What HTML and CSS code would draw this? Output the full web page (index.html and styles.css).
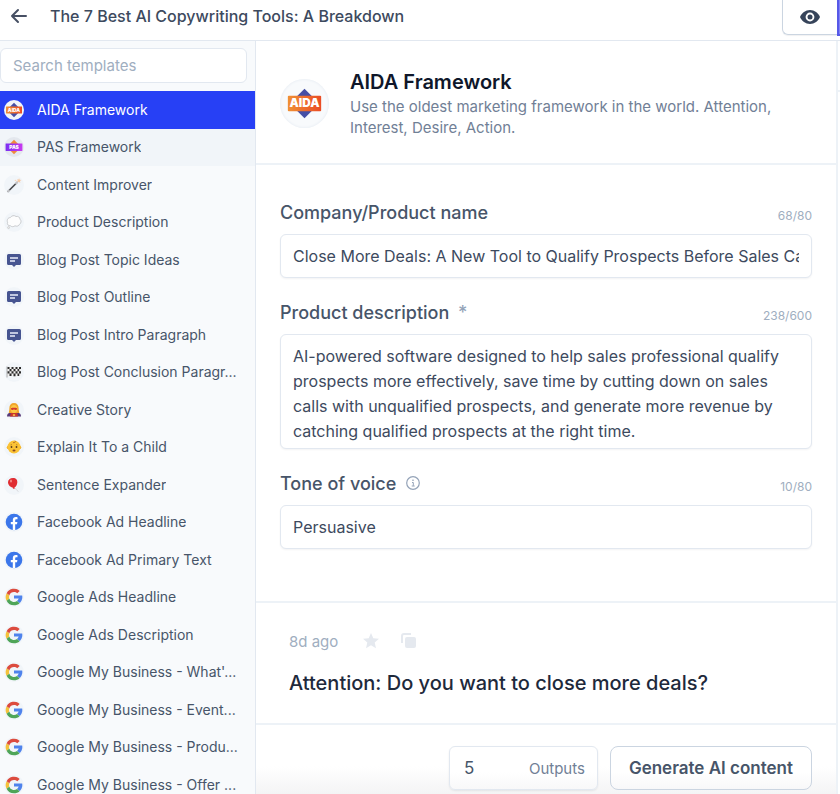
FILE: index.html
```html
<!DOCTYPE html>
<html lang="en">

<head>
    <meta charset="UTF-8">
    <meta name="viewport" content="width=device-width, initial-scale=1.0">
    <title>AIDA Framework</title>
    <link rel="stylesheet" href="styles.css">
</head>

<body>
    <!-- Shared icons -->
    <svg class="sprite" aria-hidden="true">
        <defs>
            <linearGradient id="orange" x1="0" x2="1">
                <stop offset="0" stop-color="#f09035" />
                <stop offset="1" stop-color="#ea4c25" />
            </linearGradient>
            <linearGradient id="purple" x1="0" x2="1">
                <stop offset="0" stop-color="#7b2ff2" />
                <stop offset="1" stop-color="#c93af0" />
            </linearGradient>
        </defs>
        <symbol id="icon-wand" viewBox="0 0 20 20">
            <path d="M4 16.5 13 7.5" stroke="#4a4a4e" stroke-width="1.7" stroke-linecap="round" />
            <path d="M12 8.5l2-2M4 16.5l1-1" stroke="#c9c9cc" stroke-width="1.7" stroke-linecap="round" />
            <path d="M15 3l.7 1.7 1.8.3-1.5 1 .3 2-1.5-1.2-1.7.5.8-1.7-.8-1.4 1.6.2z" fill="#f7c9a5" />
            <circle cx="11.5" cy="5.5" r=".8" fill="#f9d9bd" />
        </symbol>
        <symbol id="icon-thought" viewBox="0 0 20 20">
            <path d="M6.500 13.800C4 14 2.800 12 3.600 10.300 2.500 8 4 5.500 6.300 5.600 7.500 3.500 10.500 3 12 4.500c2-.6 4 .8 4 2.700 1.600 1.300 1.300 4-.4 5-.6 1.800-3 2.500-4.600 1.600-1.500 1.200-3.500 1.100-4.500 0z" fill="#fdfdfd" stroke="#c4c6c9" stroke-width=".9" />
            <circle cx="4.600" cy="15.600" r="1" fill="#eee" stroke="#bbb" stroke-width=".5" />
        </symbol>
        <symbol id="icon-blog" viewBox="0 0 20 20">
            <path d="M4.500 4h11A1.500 1.500 0 0 1 17 5.500v8a1.500 1.500 0 0 1-1.500 1.500H12l-2 2-2-2H4.500A1.500 1.500 0 0 1 3 13.500v-8A1.500 1.500 0 0 1 4.500 4z" fill="#465490" />
            <path d="M6 8h8M6 11h5" stroke="#e9edfa" stroke-width="1.4" />
        </symbol>
        <symbol id="icon-flag" viewBox="0 0 20 20">
            <path d="M3 5c3-1 4 1 7 .3S14 5 17 5v9c-3-1-4 .8-7 .5S6 13.500 3 15z" fill="#f0f0f0" />
            <path d="M3.500 5h2v2h-2zM7.500 5h2v2h-2zM11.500 5h2v2h-2zM15 5h2v2h-2zM5.500 7h2v2.300h-2zM9.500 7h2v2.300h-2zM13.500 7h1.700v2.300h-1.700zM3.500 9.300h2v2.300h-2zM7.500 9.300h2v2.300h-2zM11.500 9.300h2v2.300h-2zM15 9.300h2v2.300h-2zM5.500 11.600h2v2.400h-2zM9.500 11.600h2v2.600h-2zM13.500 11.600h1.700v2.400h-1.700z" fill="#2b2b2b" />
            <path d="M3 4.500v11" stroke="#777" stroke-width=".6" />
        </symbol>
        <symbol id="icon-hero" viewBox="0 0 20 20">
            <path d="M3 16.500c0-3 2-4.500 7-4.500s7 1.500 7 4.500z" fill="#5a3a78" />
            <path d="M6 16.500 7 12h6l1 4.500z" fill="#c8352b" />
            <path d="M10 3c-3 0-4.600 2-4.600 5S4.500 12.500 5 13h10c.5-.5-.4-2-.4-5S13 3 10 3z" fill="#f1a52b" />
            <ellipse cx="10" cy="9" rx="3.2" ry="4" fill="#fcc845" />
            <path d="M7 8.200c1.500-.6 4.500-.6 6 0v1.200c-1.200.7-2.200.6-3-.1-.8.700-1.800.8-3 .1z" fill="#d3392d" />
            <path d="M10 14l1.500 1-1.500 1.300L8.500 15z" fill="#fbd04f" />
        </symbol>
        <symbol id="icon-baby" viewBox="0 0 20 20">
            <circle cx="4.500" cy="10.500" r="1.800" fill="#f2b02d" />
            <circle cx="15.500" cy="10.500" r="1.800" fill="#f2b02d" />
            <circle cx="10" cy="10" r="6.500" fill="#fbc336" />
            <path d="M9 5.500c1.800.5 3-.6 2-1.700" stroke="#a8692a" stroke-width=".9" fill="none" />
            <circle cx="7.500" cy="10" r=".9" fill="#573a1e" />
            <circle cx="12.500" cy="10" r=".9" fill="#573a1e" />
            <path d="M6.500 8l1.500-.4M13.500 8l-1.500-.4" stroke="#9c6422" stroke-width=".6" />
            <ellipse cx="10" cy="13.500" rx="1.500" ry="1" fill="#8a4a22" />
        </symbol>
        <symbol id="icon-balloon" viewBox="0 0 20 20">
            <path d="M10.500 13c2 .3 1.500 2.500 4 3.500" stroke="#c9c9cd" stroke-width=".6" fill="none" />
            <path d="M9 3c3 0 4.700 2 4.300 4.800-.3 2.400-1.700 4.300-3 5l.4 1.200-1.900-.4.300-.9C6.500 12.300 4 10 4 7.200 4 4.700 6 3 9 3z" fill="#e02d32" />
            <ellipse cx="7" cy="6" rx="1" ry="1.500" fill="#f58a86" />
        </symbol>
        <symbol id="icon-facebook" viewBox="0 0 20 20">
            <circle cx="10" cy="10" r="8.3" fill="#3b76ea" />
            <path d="M8.800 18.200v-5.900h-2V10h2V8.200c0-2 1.200-3.200 3-3.200.9 0 1.700.2 1.700.2v2h-1c-1 0-1.300.6-1.300 1.200V10h2.200l-.4 2.300h-1.800v5.900z" fill="#fff" />
        </symbol>
        <symbol id="icon-google" viewBox="0 0 48 48">
            <path fill="#4f83ec" d="M43.600 20.500H24v7.300h11.300c-.8 2.200-2.200 4.200-4.100 5.600l6.200 5.200C37 39.200 44 34 44 24c0-1.300-.1-2.400-.4-3.500z" />
            <path fill="#f4c23c" d="m6.300 14.700 6.600 4.800a12 12 0 0 0-.2 8.500l-6.500 5a20 20 0 0 1 .1-18.300z" />
            <path fill="#4fa558" d="M24 44c5.200 0 9.900-2 13.400-5.200l-6.200-5.200A12 12 0 0 1 12.700 28l-6.500 5A20 20 0 0 0 24 44z" />
            <path fill="#dc4b3e" d="m6.300 14.700 6.600 4.800A12 12 0 0 1 24 12c3.100 0 5.800 1.200 7.900 3l5.700-5.600A20 20 0 0 0 6.300 14.700z" />
        </symbol>
    </svg>

    <header class="topbar">
        <a href="#" class="back" aria-label="Back">
            <svg width="18" height="16" viewBox="0 0 18 16" fill="none" stroke="#475064" stroke-width="2" stroke-linecap="round" stroke-linejoin="round">
                <path d="M16 8H2M8 2 2 8l6 6" />
            </svg>
        </a>
        <h1>The 7 Best AI Copywriting Tools: A Breakdown</h1>
        <button type="button" class="preview" aria-label="Preview">
            <svg width="20" height="16" viewBox="0 0 20 16">
                <path d="M10 1C5.500 1 1.700 3.900 0 8c1.700 4.100 5.500 7 10 7s8.300-2.900 10-7c-1.700-4.100-5.500-7-10-7z" fill="#36445a" />
                <circle cx="10" cy="8" r="4.4" fill="#fff" />
                <circle cx="10" cy="8" r="2.5" fill="#36445a" />
            </svg>
        </button>
        <button type="button" class="publish" aria-label="Publish"></button>
    </header>

    <div class="layout">
        <aside class="sidebar">
            <input type="search" class="search" placeholder="Search templates" aria-label="Search templates">
            <nav class="templates">
                <a href="#" class="active">
                    <svg viewBox="0 0 50 50">
                        <path d="M25 7 43 25 25 43 7 25z" fill="#454fa5" />
                        <rect x="5" y="16" width="40" height="18" rx="1" fill="url(#orange)" />
                        <text x="25" y="30" text-anchor="middle" class="badge-text">AIDA</text>
                    </svg>
                    <span>AIDA Framework</span>
                </a>
                <a href="#" class="hovered">
                    <svg viewBox="0 0 50 50">
                        <path d="M25 7 43 25 25 43 7 25z" fill="#f08a3c" />
                        <rect x="4" y="16" width="42" height="19" rx="1" fill="url(#purple)" />
                        <text x="25" y="30" text-anchor="middle" class="badge-text">PAS</text>
                    </svg>
                    <span>PAS Framework</span>
                </a>
                <a href="#"><svg><use href="#icon-wand" /></svg><span>Content Improver</span></a>
                <a href="#"><svg><use href="#icon-thought" /></svg><span>Product Description</span></a>
                <a href="#"><svg><use href="#icon-blog" /></svg><span>Blog Post Topic Ideas</span></a>
                <a href="#"><svg><use href="#icon-blog" /></svg><span>Blog Post Outline</span></a>
                <a href="#"><svg><use href="#icon-blog" /></svg><span>Blog Post Intro Paragraph</span></a>
                <a href="#"><svg><use href="#icon-flag" /></svg><span>Blog Post Conclusion Paragr...</span></a>
                <a href="#"><svg><use href="#icon-hero" /></svg><span>Creative Story</span></a>
                <a href="#"><svg><use href="#icon-baby" /></svg><span>Explain It To a Child</span></a>
                <a href="#"><svg><use href="#icon-balloon" /></svg><span>Sentence Expander</span></a>
                <a href="#"><svg><use href="#icon-facebook" /></svg><span>Facebook Ad Headline</span></a>
                <a href="#"><svg><use href="#icon-facebook" /></svg><span>Facebook Ad Primary Text</span></a>
                <a href="#"><svg><use href="#icon-google" /></svg><span>Google Ads Headline</span></a>
                <a href="#"><svg><use href="#icon-google" /></svg><span>Google Ads Description</span></a>
                <a href="#"><svg><use href="#icon-google" /></svg><span>Google My Business - What'...</span></a>
                <a href="#"><svg><use href="#icon-google" /></svg><span>Google My Business - Event...</span></a>
                <a href="#"><svg><use href="#icon-google" /></svg><span>Google My Business - Produ...</span></a>
                <a href="#"><svg><use href="#icon-google" /></svg><span>Google My Business - Offer ...</span></a>
            </nav>
        </aside>

        <main class="content">
            <div class="intro">
                <svg class="intro-icon" viewBox="0 0 50 50">
                    <path d="M25 10 40 25 25 40 10 25z" fill="#454fa5" />
                    <rect x="8" y="17" width="34" height="16" rx="1" fill="url(#orange)" />
                    <text x="25" y="29" text-anchor="middle" class="badge-text">AIDA</text>
                </svg>
                <div>
                    <h2>AIDA Framework</h2>
                    <p>Use the oldest marketing framework in the world. Attention, Interest, Desire, Action.</p>
                </div>
            </div>

            <form class="fields" id="templateForm">
                <div class="form-group">
                    <div class="label-row">
                        <label for="product">Company/Product name</label>
                        <span class="count">68/80</span>
                    </div>
                    <input type="text" id="product" value="Close More Deals: A New Tool to Qualify Prospects Before Sales Calls">
                </div>
                <div class="form-group">
                    <div class="label-row">
                        <label for="description">Product description <span class="required">*</span></label>
                        <span class="count">238/600</span>
                    </div>
                    <textarea id="description" rows="4">AI-powered software designed to help sales professional qualify prospects more effectively, save time by cutting down on sales calls with unqualified prospects, and generate more revenue by catching qualified prospects at the right time.</textarea>
                </div>
                <div class="form-group">
                    <div class="label-row">
                        <label for="tone">Tone of voice</label>
                        <svg class="info" width="14" height="14" viewBox="0 0 14 14" fill="none" stroke="#94a3b8">
                            <circle cx="7" cy="7" r="6.3" stroke-width="1.2" />
                            <path d="M6 6.500h1.300v3.300M5.700 10h3" />
                            <circle cx="7" cy="4.200" r=".4" />
                        </svg>
                        <span class="count">10/80</span>
                    </div>
                    <input type="text" id="tone" value="Persuasive">
                </div>
            </form>

            <section class="result">
                <div class="meta">
                    <span>8d ago</span>
                    <button type="button" aria-label="Favorite">
                        <svg width="16" height="16" viewBox="0 0 16 16" fill="#e5e9ef">
                            <path d="M8 0l2.300 5.300 5.700.5-4.300 3.800L13 15.200 8 12.200l-5 3 1.300-5.600L0 5.800l5.700-.5z" />
                        </svg>
                    </button>
                    <button type="button" aria-label="Copy">
                        <svg width="16" height="16" viewBox="0 0 16 16">
                            <path d="M1 10V3a2 2 0 0 1 2-2h7" fill="none" stroke="#e5e9ef" stroke-width="2" />
                            <rect x="4" y="4" width="11" height="11" rx="2" fill="#e5e9ef" />
                        </svg>
                    </button>
                </div>
                <p>Attention: Do you want to close more deals?</p>
            </section>

            <footer class="actions">
                <div class="outputs">
                    <input type="text" id="outputs" value="5">
                    <label for="outputs">Outputs</label>
                </div>
                <button type="submit" form="templateForm" class="generate">Generate AI content</button>
            </footer>
        </main>

        <div class="editor"></div>
    </div>
</body>

</html>
```
FILE: styles.css
```css
* {
    box-sizing: border-box;
}

body {
    display: flex;
    flex-direction: column;
    height: 100vh;
    margin: 0;
    overflow: hidden;
    font-family: Inter, "Liberation Sans", sans-serif;
    font-size: 15px;
    color: #475569;
    background: #fff;
}

h1, h2, p {
    margin: 0;
}

a {
    color: inherit;
    text-decoration: none;
}

button, input, textarea {
    font: inherit;
    color: inherit;
}

button {
    padding: 0;
    background: none;
    border: none;
    cursor: pointer;
}

.sprite {
    position: absolute;
    width: 0;
    height: 0;
}

.badge-text {
    font-size: 12px;
    font-weight: 900;
    fill: #fff;
}

/* Top bar */
.topbar {
    display: flex;
    flex: none;
    height: 41px;
    border-bottom: 1px solid #e2e8f0;
}

.back {
    width: 50px;
    padding: 8px 10px;
}

.topbar h1 {
    flex: 1;
    font-size: 16px;
    font-weight: 500;
    line-height: 33px;
    color: #3d4a5e;
}

.preview {
    width: 55px;
    height: 35px;
    border: 1px solid #cbd5e1;
    border-width: 0 0 1px 1px;
    border-radius: 0 0 0 6px;
    box-shadow: 0 1px 1px rgba(15, 23, 42, 0.06);
}

.preview svg {
    display: block;
    margin: 0 auto;
}

.publish {
    width: 3px;
    height: 36px;
    background: #8183f4;
    border: 2px solid #5759e8;
    border-width: 0 0 2px 2px;
}

/* Sidebar */
.layout {
    display: grid;
    flex: 1;
    grid-template-columns: 256px 1fr 4px;
    min-height: 0;
}

.sidebar {
    padding-top: 7px;
    overflow: hidden;
    background: #f8fafc;
    border-right: 1px solid #e2e8f0;
}

.search {
    display: block;
    width: 247px;
    height: 35px;
    padding: 0 12px;
    background: #fff;
    border: 1px solid #e2e8f0;
    border-radius: 6px;
    outline: none;
    appearance: none;
}

.search::placeholder {
    color: #a0aec0;
    opacity: 1;
}

.templates {
    margin-top: 8px;
}

.templates a {
    display: flex;
    gap: 13px;
    align-items: center;
    min-height: 2.5em;
    padding-left: 4px;
}

.templates a.active {
    color: #fff;
    background: #2740f5;
}

.templates a.hovered {
    background: #f1f5f9;
}

.templates svg {
    flex: none;
    width: 20px;
    height: 20px;
    background: #f1f5f9;
    border-radius: 50%;
}

.templates .hovered svg {
    background: #e4e8ee;
}

.templates span {
    overflow: hidden;
    font-size: 14px;
    line-height: 20px;
    white-space: nowrap;
}

/* Main column */
.content {
    display: flex;
    flex-direction: column;
    min-width: 0;
}

.intro {
    display: flex;
    gap: 21px;
    align-items: center;
    padding: 27px 56px 25px 24px;
    border-bottom: 2px solid #edf2f7;
}

.intro-icon {
    flex: none;
    width: 49px;
    height: 49px;
    background: #f8fafc;
    border-radius: 50%;
    box-shadow: inset 0 0 3px #e2e8f0;
}

.intro h2 {
    font-size: 20px;
    font-weight: 600;
    line-height: 28px;
    color: #0f172a;
}

.intro p {
    line-height: 21px;
    color: #718096;
}

.fields {
    flex: 1;
    padding: 36px 24px 0;
}

.form-group {
    margin-bottom: 23px;
}

.label-row {
    display: flex;
    align-items: center;
    height: 22px;
    margin-bottom: 11px;
}

.label-row label {
    font-size: 18px;
    font-weight: 500;
}

.required {
    margin-left: 4px;
    color: #94a3b8;
}

.info {
    margin-left: 10px;
}

.count {
    align-self: flex-end;
    margin-left: auto;
    font-size: 12px;
    line-height: 14px;
    color: #a0aec0;
}

.form-group input,
.form-group textarea {
    display: block;
    width: 100%;
    height: 44px;
    padding: 0 12px;
    font-size: 16px;
    color: #3d4a5e;
    border: 1px solid #e2e8f0;
    border-radius: 6px;
    outline: none;
    box-shadow: 0 1px 2px rgba(15, 23, 42, 0.05);
}

.form-group textarea {
    height: auto;
    padding: 9px 12px 4px;
    line-height: 25px;
    resize: none;
}

/* Result */
.result {
    padding: 26px 33px;
    border-top: 2px solid #edf2f7;
    border-bottom: 2px solid #edf2f7;
}

.meta {
    display: flex;
    gap: 22px;
    align-items: center;
    height: 24px;
    color: #a0aec0;
}

.meta span {
    margin-right: 3px;
}

.meta svg {
    display: block;
}

.result p {
    margin-top: 16px;
    font-size: 20px;
    font-weight: 500;
    line-height: 28px;
    color: #1e293b;
}

/* Footer */
.actions {
    display: flex;
    gap: 12px;
    justify-content: flex-end;
    padding: 21px 24px 4px;
    background: linear-gradient(#fff 60%, #f4f4f5);
}

.outputs {
    display: flex;
    align-items: center;
    width: 149px;
    height: 44px;
    padding: 0 12px 0 14px;
    background: linear-gradient(#fff 60%, #f8f8f9);
    border: 1px solid #e2e8f0;
    border-radius: 6px;
    box-shadow: 0 1px 2px rgba(15, 23, 42, 0.08);
}

.outputs input {
    flex: 1;
    min-width: 0;
    padding: 0;
    font-size: 17px;
    background: none;
    border: none;
    outline: none;
}

.outputs label {
    color: #718096;
}

.generate {
    height: 44px;
    padding: 0 18px;
    font-size: 17px;
    font-weight: 600;
    background: linear-gradient(#fff 60%, #f8f8f9);
    border: 1px solid #cbd5e1;
    border-radius: 8px;
}

/* Editor edge */
.editor {
    border-left: 2px solid #edf2f7;
    background: linear-gradient(#edf2f7, #edf2f7) 0 49px / 100% 2px no-repeat;
}
```
